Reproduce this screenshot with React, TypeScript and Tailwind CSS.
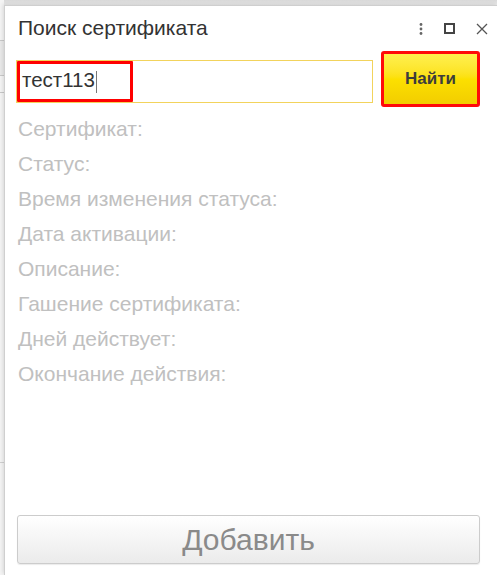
import React from "react";

export default function App() {
  const labels = [
    "Сертификат:",
    "Статус:",
    "Время изменения статуса:",
    "Дата активации:",
    "Описание:",
    "Гашение сертификата:",
    "Дней действует:",
    "Окончание действия:",
  ];
  return (
    <div
      className="w-[497px] h-[575px] overflow-hidden flex bg-gradient-to-b from-[#d9d9d9] to-[#eeeeee] to-[1%]"
      style={{ fontFamily: '"Liberation Sans", Arial, sans-serif' }}
    >
      <div className="w-[4px] flex flex-col bg-[#f4f4f4] pt-[40px]">
        <div className="h-[36px] border-y border-[#c9c9c9] bg-[#e9e9e9]" />
        <div className="h-[16px]" />
        <div className="h-px bg-[#c8c8c8]" />
        <div className="h-[369px]" />
        <div className="h-px bg-[#d0d0d0]" />
      </div>
      <div className="flex-1 mt-[5px] bg-white border-l border-t border-[#cfcfcf] flex flex-col shadow-[-1px_-1px_4px_rgba(0,0,0,0.12)]">
        <div className="h-[45px] flex items-center pl-[13px] pr-[9px]">
          <div className="text-[21px] text-[#333333] flex-1 -mt-[2px]">Поиск сертификата</div>
          <div className="flex items-center gap-[21px] text-[#555555]">
            <svg width="4" height="12" viewBox="0 0 4 12">
              <circle cx="2" cy="1.5" r="1.4" fill="#666" />
              <circle cx="2" cy="6" r="1.4" fill="#666" />
              <circle cx="2" cy="10.5" r="1.4" fill="#666" />
            </svg>
            <svg width="11" height="11" viewBox="0 0 11 11">
              <rect x="1" y="1" width="9" height="9" fill="none" stroke="#444" strokeWidth="2" />
            </svg>
            <svg width="12" height="12" viewBox="0 0 12 12">
              <path d="M1 1L11 11M11 1L1 11" stroke="#555" strokeWidth="1.3" />
            </svg>
          </div>
        </div>
        <div className="flex items-start pl-[11px]">
          <div className="relative mt-[9px] w-[357px] h-[43px] border border-[#f2d35c] flex items-center pl-[5px]">
            <span className="text-[20.5px] text-[#333333] -mt-[2px]">тест113</span>
            <span className="ml-[1px] w-px h-[22px] bg-[#777777]" />
            <div className="absolute left-0 top-0 w-[116px] h-[41px] border-[3px] border-[#ff0000] rounded-[1px]" />
          </div>
          <div className="ml-[8px] w-[99px] h-[56px] border-[3px] border-[#ff0a0a] rounded-[3px] bg-gradient-to-b from-[#fff04d] via-[#fce000] to-[#f2cd00] flex items-center justify-center">
            <span className="text-[17px] font-bold text-[#3d3d3d]">Найти</span>
          </div>
        </div>
        <div className="pl-[13px] pt-[4px] flex flex-col">
          {labels.map((l) => (
            <div key={l} className="h-[35px] leading-[35px] text-[21px] text-[#c0c0c0]">
              {l}
            </div>
          ))}
        </div>
        <div className="flex-1" />
        <div className="pl-[12px] pb-[11px]">
          <div className="w-[463px] h-[49px] border border-[#cccccc] rounded-[3px] bg-gradient-to-b from-white to-[#ebebeb] shadow-[0_1px_1px_rgba(0,0,0,0.08)] flex items-center justify-center">
            <span className="text-[30px] text-[#8a8a8a]">Добавить</span>
          </div>
        </div>
      </div>
    </div>
  );
}
